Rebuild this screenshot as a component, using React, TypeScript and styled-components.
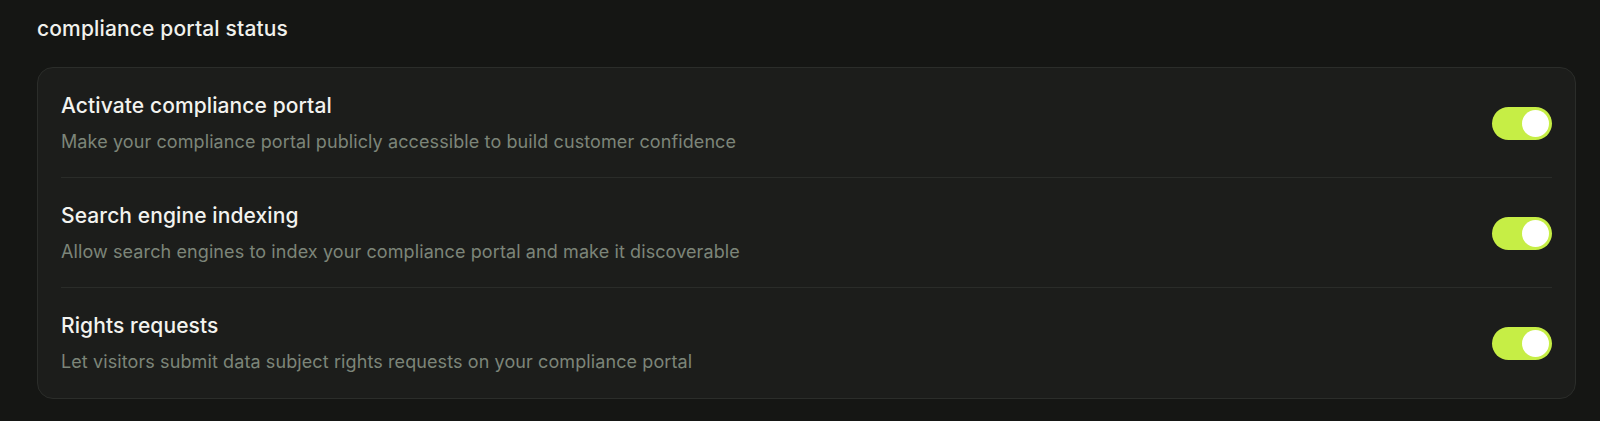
import React, { useState } from "react";
import styled, { createGlobalStyle } from "styled-components";

const GlobalStyle = createGlobalStyle`
  html, body {
    margin: 0;
    padding: 0;
    background: #151614;
  }
  body {
    font-family: Inter, "Noto Sans", "Liberation Sans", sans-serif;
    -webkit-font-smoothing: antialiased;
  }
`;

const Page = styled.div`
  padding: 16px 24px 24px 37px;
  min-height: 421px;
  box-sizing: border-box;
`;

const Heading = styled.h2`
  margin: 0 0 25px;
  font-size: 21px;
  line-height: 26px;
  font-weight: 500;
  letter-spacing: 0.15px;
  color: #f1f1ed;
`;

const Card = styled.section`
  background: #1c1d1b;
  border: 1px solid #2b2d2a;
  border-radius: 16px;
  padding: 0 23px;
`;

const Row = styled.div`
  display: flex;
  align-items: center;
  justify-content: space-between;
  padding: 24px 0 23px;
  border-bottom: 1px solid #2a2c29;

  &:last-child {
    border-bottom: none;
    padding-bottom: 24px;
  }
`;

const Text = styled.div`
  display: flex;
  flex-direction: column;
`;

const Title = styled.div`
  font-size: 21px;
  line-height: 28px;
  font-weight: 500;
  letter-spacing: 0.1px;
  color: #f3f3ef;
`;

const Description = styled.div`
  margin-top: 10px;
  font-size: 18px;
  line-height: 24px;
  letter-spacing: 0.1px;
  color: #7c8579;
`;

const Track = styled.button<{ $on: boolean }>`
  position: relative;
  width: 60px;
  height: 33px;
  border: none;
  padding: 0;
  border-radius: 999px;
  background: ${(p) => (p.$on ? "#c6ee45" : "#3a3c38")};
  cursor: pointer;
  flex-shrink: 0;
`;

const Thumb = styled.span<{ $on: boolean }>`
  position: absolute;
  top: 3px;
  left: ${(p) => (p.$on ? "30px" : "3px")};
  width: 27px;
  height: 27px;
  border-radius: 50%;
  background: #ffffff;
  transition: left 0.2s ease;
`;

const Toggle: React.FC<{ on: boolean; onChange: () => void }> = ({ on, onChange }) => (
  <Track $on={on} onClick={onChange} role="switch" aria-checked={on}>
    <Thumb $on={on} />
  </Track>
);

const settings = [
  {
    title: "Activate compliance portal",
    description: "Make your compliance portal publicly accessible to build customer confidence",
  },
  {
    title: "Search engine indexing",
    description: "Allow search engines to index your compliance portal and make it discoverable",
  },
  {
    title: "Rights requests",
    description: "Let visitors submit data subject rights requests on your compliance portal",
  },
];

export default function App() {
  const [state, setState] = useState<boolean[]>([true, true, true]);

  return (
    <Page>
      <GlobalStyle />
      <Heading>compliance portal status</Heading>
      <Card>
        {settings.map((s, i) => (
          <Row key={s.title}>
            <Text>
              <Title>{s.title}</Title>
              <Description>{s.description}</Description>
            </Text>
            <Toggle
              on={state[i]}
              onChange={() => setState((prev) => prev.map((v, j) => (j === i ? !v : v)))}
            />
          </Row>
        ))}
      </Card>
    </Page>
  );
}
